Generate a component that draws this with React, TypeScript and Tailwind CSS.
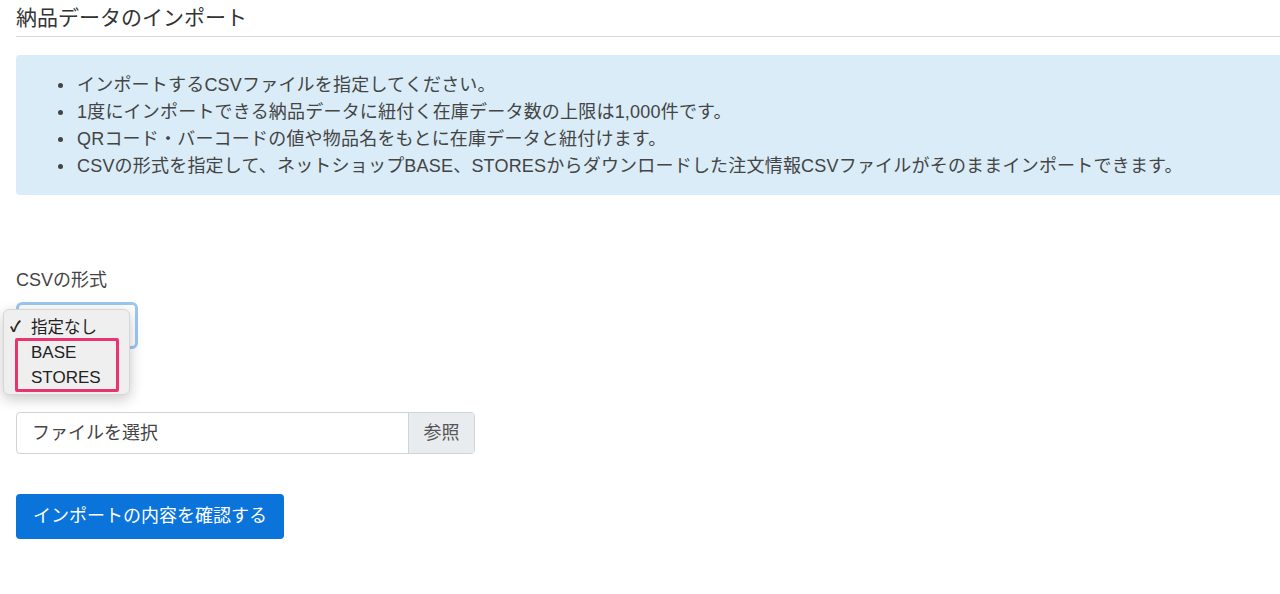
import React from 'react'

const NOTES = [
  'インポートするCSVファイルを指定してください。',
  '1度にインポートできる納品データに紐付く在庫データ数の上限は1,000件です。',
  'QRコード・バーコードの値や物品名をもとに在庫データと紐付けます。',
  'CSVの形式を指定して、ネットショップBASE、STORESからダウンロードした注文情報CSVファイルがそのままインポートできます。',
]

const FONT = "font-['Liberation_Sans','Noto_Sans_CJK_JP',sans-serif]"

const FormatSelect: React.FC = () => {
  return (
    <div className="relative w-[122px] h-[47px]">
      <div className="w-full h-full rounded-[6px] border-[3px] border-[#9cc7f3] bg-white flex items-center justify-end pr-[6px]">
        <svg width="8" height="6" viewBox="0 0 8 6" className="text-[#444]">
          <path d="M1 1.5 L4 4.5 L7 1.5" fill="none" stroke="currentColor" strokeWidth="1.4" />
        </svg>
      </div>

      {/* open option menu */}
      <div className="absolute left-[-13px] top-[7px] w-[127px] h-[86px] rounded-[6px] bg-[#efefef] border border-[#d6d6d6] shadow-[0_4px_14px_rgba(0,0,0,0.22)] pt-[4px]">
        <div className="flex items-center h-[26px] text-[16.5px] text-[#222]">
          <span className="w-[27px] pl-[6px] text-[15px] font-bold">✓</span>
          <span>指定なし</span>
        </div>
        <div className="flex items-center h-[25px] text-[17px] text-[#222] pl-[27px]">BASE</div>
        <div className="flex items-center h-[25px] text-[17px] text-[#222] pl-[27px]">STORES</div>

        <div className="absolute left-[11px] top-[28px] w-[104px] h-[54px] border-[3px] border-[#e8356f] rounded-[2px]" />
      </div>
    </div>
  )
}

const App: React.FC = () => {
  return (
    <div className={`w-screen h-[594px] overflow-hidden bg-white ${FONT}`}>
      <div className="w-[1320px] pl-[16px] text-[#444]">
        <h2 className="pt-[3px] pb-[3px] leading-[30px] text-[21px] font-normal text-[#333] border-b border-[#d8d8d8]">
          納品データのインポート
        </h2>

        <div className="mt-[18px] h-[140px] bg-[#d9ecf7] rounded-l-[4px] pt-[17px] pl-[42px]">
          <ul>
            {NOTES.map((note) => {
              return (
                <li key={note} className="flex items-center h-[27px] text-[18px] leading-[27px] tracking-[0.2px]">
                  <span className="w-[5px] h-[5px] rounded-full bg-[#444] mr-[14px]" />
                  <span>{note}</span>
                </li>
              )
            })}
          </ul>
        </div>

        <div className="mt-[72px] text-[18px] leading-[27px]">CSVの形式</div>

        <div className="relative z-10 mt-[8px]">
          <FormatSelect />
        </div>

        <div className="mt-[63px] flex w-[459px] h-[42px] border border-[#ced4da] rounded-[4px] overflow-hidden">
          <div className="flex-1 flex items-center pl-[15px] text-[18px] text-[#444]">ファイルを選択</div>
          <div className="w-[66px] flex items-center justify-center bg-[#e9ecef] border-l border-[#ced4da] text-[18px] text-[#555]">
            参照
          </div>
        </div>

        <button className="mt-[40px] h-[45px] px-[17px] rounded-[4px] bg-[#0a74da] text-white text-[18px]">
          インポートの内容を確認する
        </button>
      </div>
    </div>
  )
}

export default App
